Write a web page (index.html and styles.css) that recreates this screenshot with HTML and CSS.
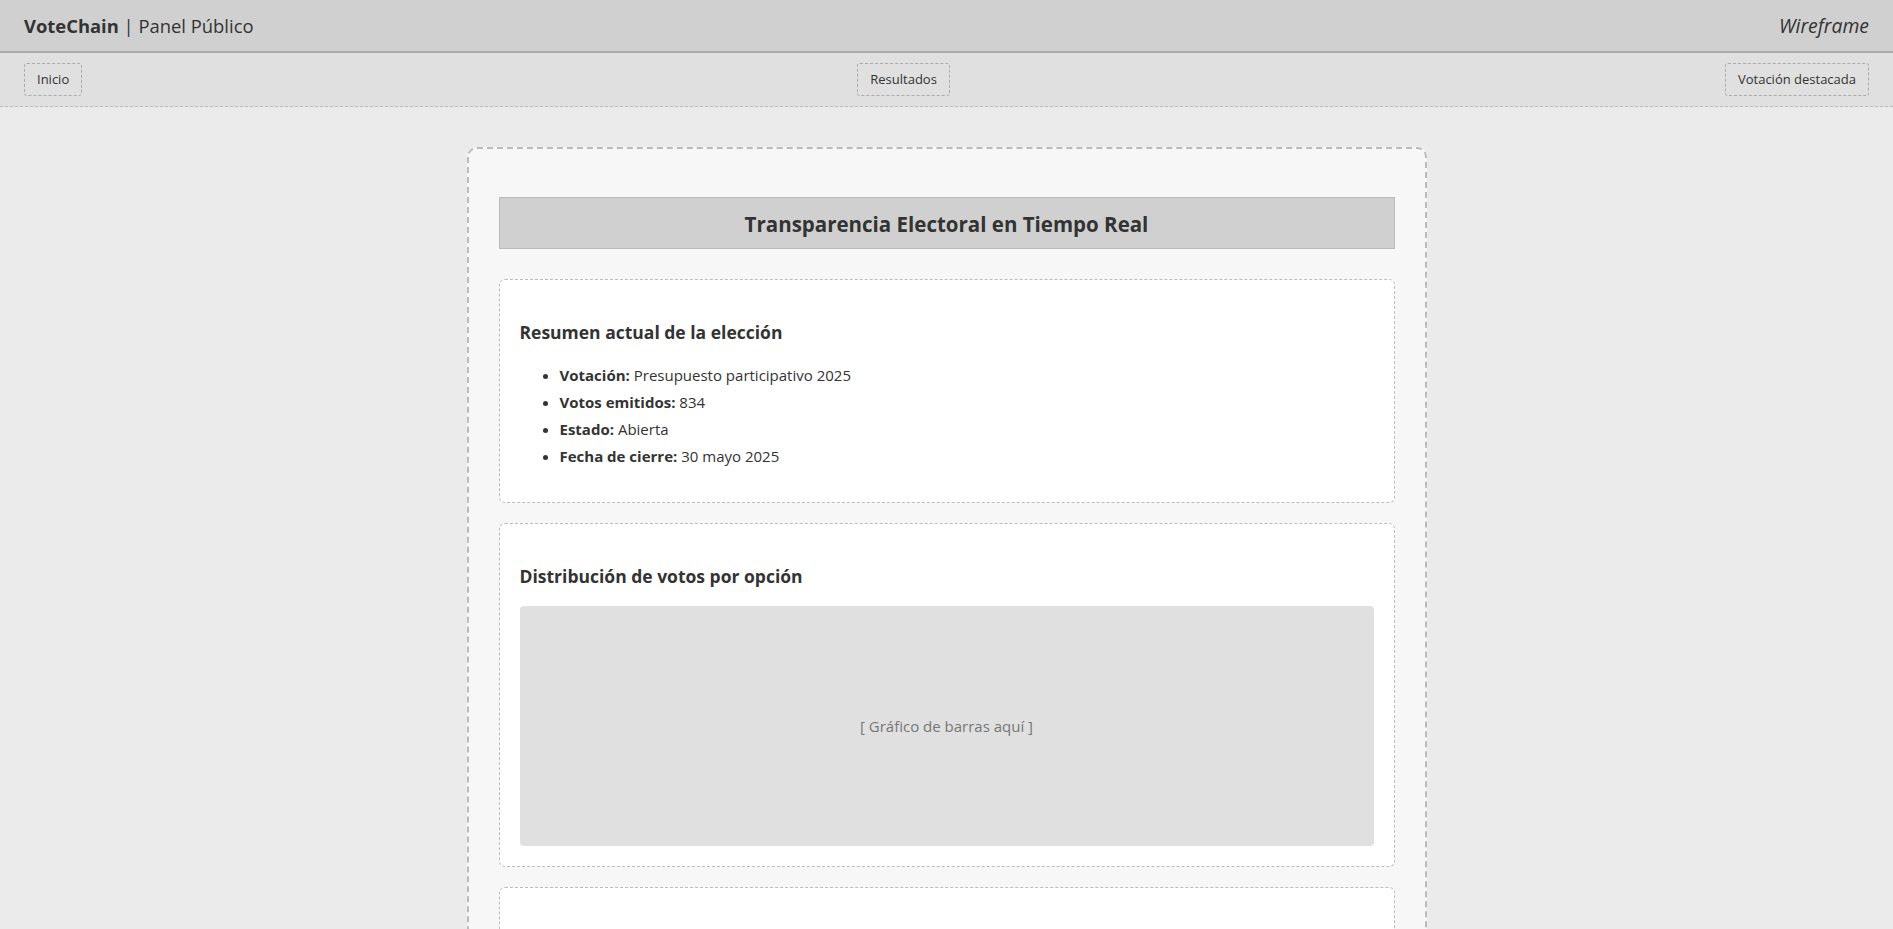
FILE: index.html
```html
<!DOCTYPE html>
<html lang="es">
<head>
<meta charset="utf-8">
<title>VoteChain | Panel Público</title>
<link rel="stylesheet" href="styles.css">
</head>
<body>
<header class="topbar">
  <div class="brand"><strong>VoteChain</strong> | Panel Público</div>
  <div class="tag">Wireframe</div>
</header>
<nav class="navbar">
  <a class="navbtn" href="#">Inicio</a>
  <a class="navbtn" href="#">Resultados</a>
  <a class="navbtn" href="#">Votación destacada</a>
</nav>
<main class="page">
  <h1 class="title">Transparencia Electoral en Tiempo Real</h1>
  <section class="card">
    <h3 class="card-title">Resumen actual de la elección</h3>
    <ul class="facts">
      <li><strong>Votación:</strong> Presupuesto participativo 2025</li>
      <li><strong>Votos emitidos:</strong> 834</li>
      <li><strong>Estado:</strong> Abierta</li>
      <li><strong>Fecha de cierre:</strong> 30 mayo 2025</li>
    </ul>
  </section>
  <section class="card">
    <h3 class="card-title">Distribución de votos por opción</h3>
    <div class="chart">[ Gráfico de barras aquí ]</div>
  </section>
  <section class="card card-last">
    <h3 class="card-title">Verificación en la cadena de bloques</h3>
    <p class="note">Consulta el hash de tu voto para comprobar que fue registrado.</p>
  </section>
</main>
</body>
</html>
```
FILE: styles.css
```css
* { box-sizing: border-box; }
html, body { margin: 0; padding: 0; }
body {
  background: #ebebeb;
  color: #333;
  font-family: "Open Sans", "Noto Sans", sans-serif;
}
.topbar {
  height: 53px;
  background: #d0d0d0;
  border-bottom: 2px solid #aaa;
  display: flex;
  justify-content: space-between;
  align-items: center;
  padding: 0 24px;
  font-size: 18.4px;
}
.brand strong { font-weight: 700; }
.tag { font-style: italic; font-size: 19.4px; }
.navbar {
  background: #e0e0e0;
  border-bottom: 1px dashed #bbb;
  display: flex;
  justify-content: space-between;
  padding: 10px 24px;
}
.navbtn {
  display: block;
  height: 33px;
  line-height: 31px;
  padding: 0 12px;
  border: 1px dashed #aaa;
  border-radius: 3px;
  font-size: 13px;
  color: #333;
  text-decoration: none;
}
.page {
  width: 960px;
  margin: 40px auto 0;
  padding: 30px 30px 40px;
  background: #f7f7f7;
  border: 2px dashed #bbb;
  border-radius: 10px;
}
.title {
  margin: 18px 0 30px;
  height: 52px;
  line-height: 52px;
  background: #d0d0d0;
  border: 1px solid #bbb;
  text-align: center;
  font-size: 20.5px;
  font-weight: 700;
}
.card {
  background: #fff;
  border: 1px dashed #bbb;
  border-radius: 6px;
  padding: 20px;
  margin-bottom: 20px;
}
.card-title {
  font-size: 17.5px;
  font-weight: 700;
  margin: 20px 0 18px;
}
.facts {
  margin: 0 0 12px;
  padding-left: 40px;
  font-size: 15px;
  line-height: 27px;
}
.chart {
  height: 240px;
  background: #e0e0e0;
  border-radius: 4px;
  display: flex;
  align-items: center;
  justify-content: center;
  color: #777;
  font-size: 15px;
}
.card-last .card-title { margin-top: 64px; }
.note { font-size: 15px; }
```
